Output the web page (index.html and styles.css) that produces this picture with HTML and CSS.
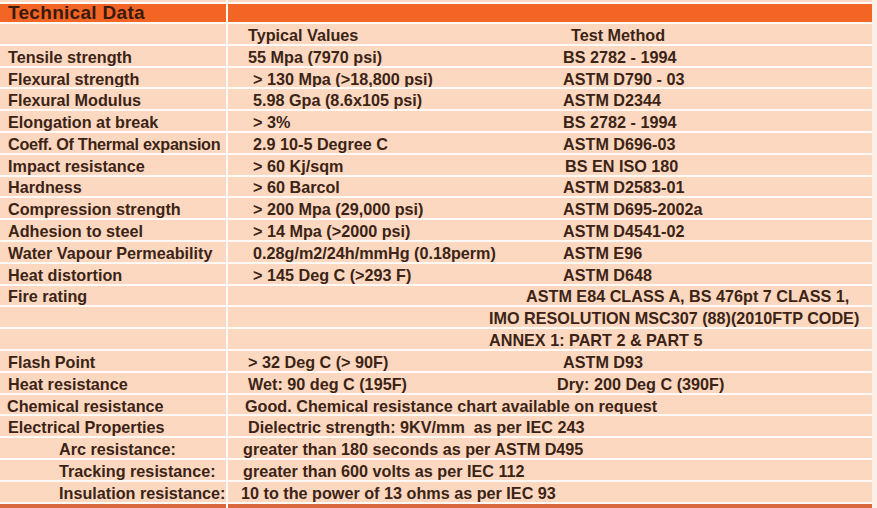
FILE: index.html
```html
<!DOCTYPE html>
<html>
<head>
<meta charset="utf-8">
<link rel="stylesheet" href="styles.css">
</head>
<body>
<div class="sheet">
  <div class="grid">
    <div class="cell top"></div><div class="cell top"></div>
    <div class="cell head"><span class="title">Technical Data</span></div><div class="cell head"></div>

    <div class="cell"></div><div class="cell r"><span class="v">Typical Values</span><span class="m m-head">Test Method</span></div>

    <div class="cell l">Tensile strength</div><div class="cell r"><span class="v">55 Mpa (7970 psi)</span><span class="m">BS 2782 - 1994</span></div>
    <div class="cell l">Flexural strength</div><div class="cell r"><span class="v sp">&gt; 130 Mpa (&gt;18,800 psi)</span><span class="m">ASTM D790 - 03</span></div>
    <div class="cell l">Flexural Modulus</div><div class="cell r"><span class="v sp">5.98 Gpa (8.6x105 psi)</span><span class="m">ASTM D2344</span></div>
    <div class="cell l">Elongation at break</div><div class="cell r"><span class="v sp">&gt; 3%</span><span class="m">BS 2782 - 1994</span></div>
    <div class="cell l l-tight">Coeff. Of Thermal expansion</div><div class="cell r"><span class="v sp">2.9 10-5 Degree C</span><span class="m">ASTM D696-03</span></div>
    <div class="cell l">Impact resistance</div><div class="cell r"><span class="v sp">&gt; 60 Kj/sqm</span><span class="m m-bs">BS EN ISO 180</span></div>
    <div class="cell l">Hardness</div><div class="cell r"><span class="v sp">&gt; 60 Barcol</span><span class="m">ASTM D2583-01</span></div>
    <div class="cell l">Compression strength</div><div class="cell r"><span class="v sp">&gt; 200 Mpa (29,000 psi)</span><span class="m">ASTM D695-2002a</span></div>
    <div class="cell l">Adhesion to steel</div><div class="cell r"><span class="v sp">&gt; 14 Mpa (&gt;2000 psi)</span><span class="m">ASTM D4541-02</span></div>
    <div class="cell l">Water Vapour Permeability</div><div class="cell r"><span class="v sp">0.28g/m2/24h/mmHg (0.18perm)</span><span class="m">ASTM E96</span></div>
    <div class="cell l">Heat distortion</div><div class="cell r"><span class="v sp">&gt; 145 Deg C (&gt;293 F)</span><span class="m">ASTM D648</span></div>

    <div class="cell l">Fire rating</div><div class="cell r"><span class="fire fire-1">ASTM E84 CLASS A, BS 476pt 7 CLASS 1,</span></div>
    <div class="cell l"></div><div class="cell r"><span class="fire">IMO RESOLUTION MSC307 (88)(2010FTP CODE)</span></div>
    <div class="cell l"></div><div class="cell r"><span class="fire">ANNEX 1: PART 2 &amp; PART 5</span></div>

    <div class="cell l">Flash Point</div><div class="cell r"><span class="v">&gt; 32 Deg C (&gt; 90F)</span><span class="m">ASTM D93</span></div>
    <div class="cell l">Heat resistance</div><div class="cell r"><span class="v">Wet: 90 deg C (195F)</span><span class="m m-dry">Dry: 200 Deg C (390F)</span></div>
    <div class="cell l l-chem">Chemical resistance</div><div class="cell r r-chem"><span class="wide w-chem">Good. Chemical resistance chart available on request</span></div>
    <div class="cell l">Electrical Properties</div><div class="cell r"><span class="wide w-diel">Dielectric strength: 9KV/mm&nbsp; as per IEC 243</span></div>
    <div class="cell l sub">Arc resistance:</div><div class="cell r"><span class="wide w-gt">greater than 180 seconds as per ASTM D495</span></div>
    <div class="cell l sub">Tracking resistance:</div><div class="cell r"><span class="wide w-gt">greater than 600 volts as per IEC 112</span></div>
    <div class="cell l sub">Insulation resistance:</div><div class="cell r"><span class="wide w-ins">10 to the power of 13 ohms as per IEC 93</span></div>

    <div class="cell foot"></div><div class="cell foot"></div>
  </div>
</div>
</body>
</html>
```

FILE: styles.css
```css
html, body {
  margin: 0;
  padding: 0;
}

body {
  background: #fcefe7;
  width: 877px;
  height: 508px;
  overflow: hidden;
  font-family: "Liberation Sans", Arial, sans-serif;
  font-weight: bold;
  font-size: 16.2px;
  color: #3b2416;
}

.sheet {
  width: 872px;
}

.grid {
  display: grid;
  grid-template-columns: 226px 1fr;
  grid-template-rows: 2px 18px repeat(22, 19.8px) 6px;
  column-gap: 2px;
  row-gap: 2px;
  background: #fffaf6;
}

.cell {
  background: #fdd8c0;
  white-space: nowrap;
  display: flex;
  align-items: center;
  line-height: 18px;
  padding-top: 2px;
  box-sizing: border-box;
  overflow: hidden;
}

.top {
  background: #fbd9c4;
  padding-top: 0;
}

.head {
  background: #f26524;
  padding-top: 0;
  overflow: visible;
}

.title {
  padding-left: 8px;
  font-size: 19px;
  line-height: 18px;
  letter-spacing: 0.3px;
  color: #3a1a0c;
}

.foot {
  background: #d9693d;
  padding-top: 0;
}

.l {
  padding-left: 8px;
}

.l-tight {
  letter-spacing: -0.3px;
}

.l.sub {
  padding-left: 59px;
}

.l-chem {
  padding-left: 7px;
  padding-top: 4px;
}

.r {
  padding-left: 20px;
}

.r-chem {
  padding-top: 4px;
}

.v {
  width: 315px;
  flex: none;
}

.v.sp {
  padding-left: 5px;
  width: 310px;
}

.m {
  flex: none;
}

.m-head {
  padding-left: 8px;
}

.m-bs {
  padding-left: 2px;
}

.m-dry {
  margin-left: -6px;
}

.fire {
  padding-left: 241px;
}

.fire-1 {
  padding-left: 278px;
}

.wide {
  flex: none;
}

.w-chem {
  margin-left: -3px;
}

.w-gt {
  margin-left: -5px;
}

.w-ins {
  margin-left: -7px;
}
```
